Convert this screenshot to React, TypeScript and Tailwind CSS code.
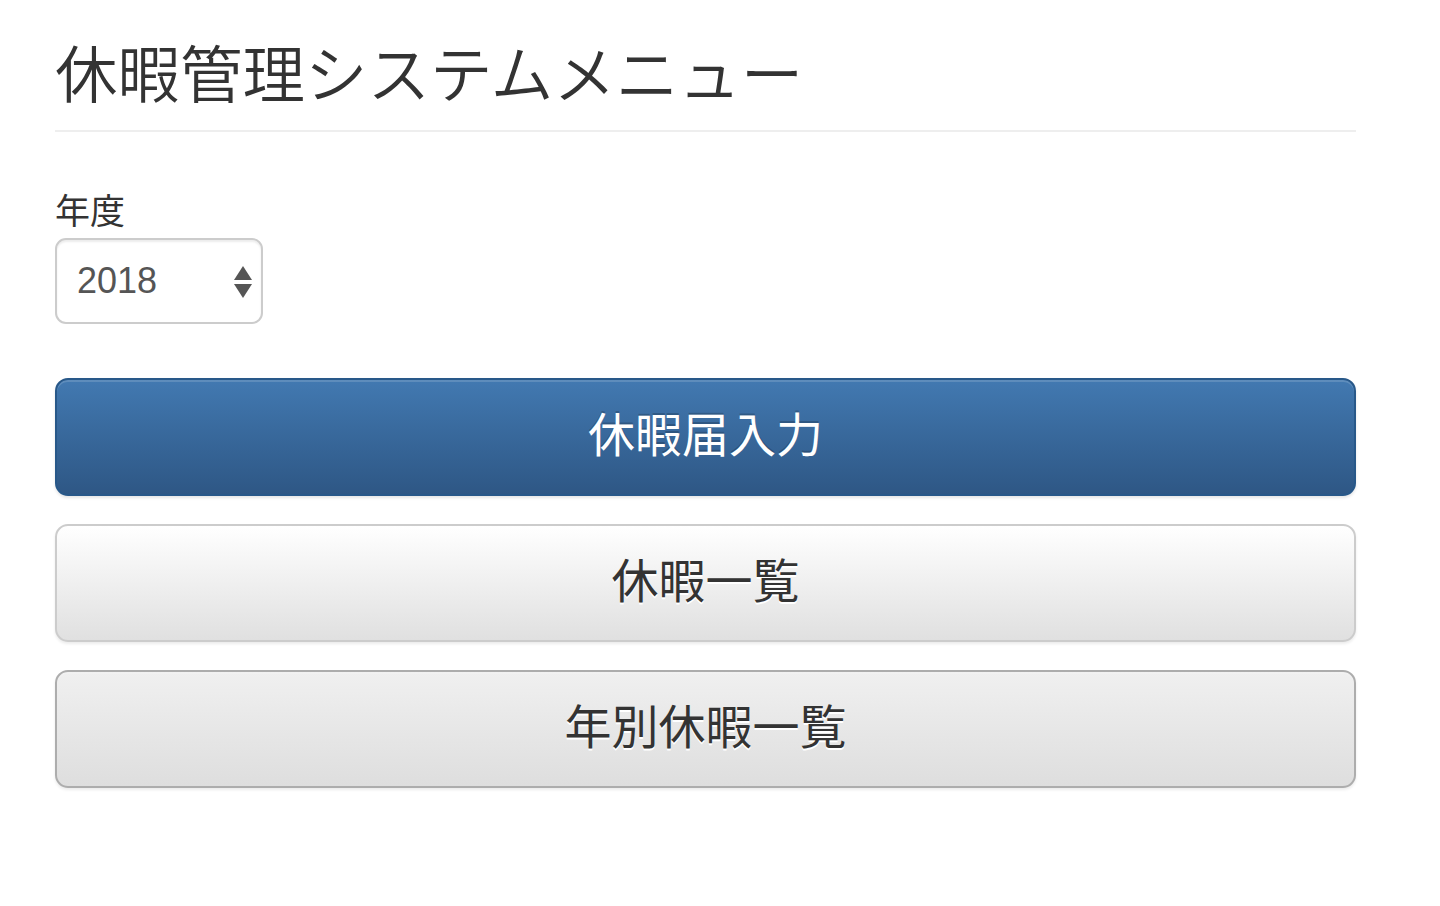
import React from "react";

export default function App() {
  return (
    <div className="min-h-[906px] bg-white font-['Noto_Sans_CJK_JP',sans-serif]">
      <div className="pl-[55px] pr-[84px] pt-[31px]">
        <h1 className="text-[62.5px] leading-[80px] text-[#333] font-[350] whitespace-nowrap">
          休暇管理システムメニュー
        </h1>
        <div className="mt-[19px] h-[2px] bg-[#eeeeee]" />
        <div className="mt-[52px]">
          <label className="block text-[35px] leading-[50px] text-[#333] font-normal">
            年度
          </label>
          <div className="mt-[4px] relative w-[208px] h-[86px] rounded-[11px] border-[2px] border-[#cccccc] bg-white shadow-[inset_0_2px_2px_rgba(0,0,0,0.075)] flex items-center">
            <span className="pl-[20px] text-[36px] text-[#555] font-['Liberation_Sans',Arial,sans-serif]">2018</span>
            <svg className="absolute left-[176px] top-[24px]" width="20" height="36" viewBox="0 0 20 36">
              <polygon points="10,2 19,16 1,16" fill="#555" />
              <polygon points="1,20 19,20 10,34" fill="#555" />
            </svg>
          </div>
        </div>
        <div className="mt-[54px] flex flex-col gap-[28px]">
          <button className="h-[118px] w-full pb-[10px] rounded-[13px] border-[2px] border-[#285889] bg-gradient-to-b from-[#4279b1] to-[#2e5785] text-white text-[47px] shadow-[inset_0_2px_0_rgba(255,255,255,0.15),0_2px_3px_rgba(0,0,0,0.1)] [text-shadow:0_-2px_0_rgba(0,0,0,0.2)]">
            休暇届入力
          </button>
          <button className="h-[118px] w-full pb-[10px] rounded-[13px] border-[2px] border-[#cccccc] bg-gradient-to-b from-[#ffffff] to-[#e0e0e0] text-[#333] text-[47px] shadow-[inset_0_2px_0_rgba(255,255,255,0.15),0_2px_3px_rgba(0,0,0,0.08)] [text-shadow:0_2px_0_#fff]">
            休暇一覧
          </button>
          <button className="h-[118px] w-full pb-[10px] rounded-[13px] border-[2px] border-[#adadad] bg-gradient-to-b from-[#f0f0f0] to-[#dedede] text-[#333] text-[47px] shadow-[inset_0_2px_0_rgba(255,255,255,0.15),0_2px_3px_rgba(0,0,0,0.08)] [text-shadow:0_2px_0_#fff]">
            年別休暇一覧
          </button>
        </div>
      </div>
    </div>
  );
}
